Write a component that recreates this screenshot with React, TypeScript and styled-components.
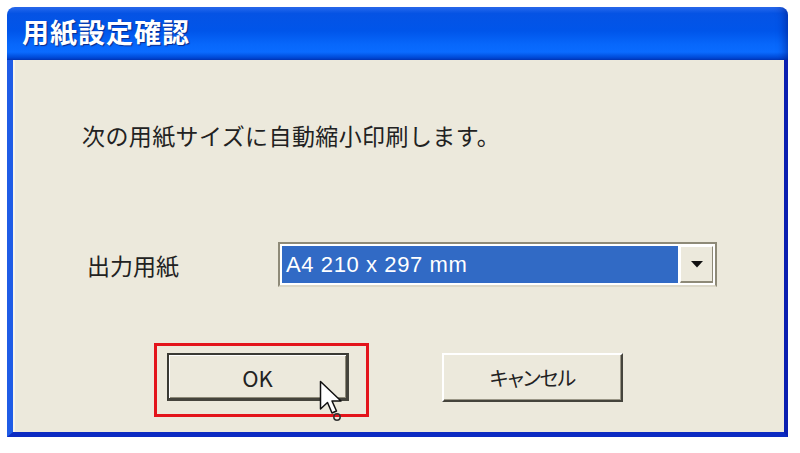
import styled, { createGlobalStyle } from "styled-components";

const GlobalStyle = createGlobalStyle`
  html, body {
    margin: 0;
    padding: 0;
    background: #ffffff;
  }
  body {
    width: 800px;
    height: 453px;
    overflow: hidden;
    font-family: "Noto Sans CJK JP", "Liberation Sans", sans-serif;
  }
`;

const jp = `"Noto Sans CJK JP", "Liberation Sans", sans-serif`;

export default function App() {
  return (
    <>
      <GlobalStyle />
      <Screen>
        <Window>
          <TitleBar>用紙設定確認</TitleBar>
          <Body>
            <Message>次の用紙サイズに自動縮小印刷します。</Message>

            <FieldRow>
              <Label>出力用紙</Label>
              <Combo>
                <Selection>A4 210 x 297 mm</Selection>
                <DropButton>
                  <svg width="12" height="7" viewBox="0 0 12 7">
                    <path d="M0 0 H12 L6 6.5 Z" fill="#111" />
                  </svg>
                </DropButton>
              </Combo>
            </FieldRow>

            <ButtonRow>
              <Highlight>
                <Button $default>OK</Button>
                <Cursor>
                  <svg width="30" height="44" viewBox="0 0 30 44">
                    <path
                      d="M1.5 1.5 L1.5 29 L8.5 22.5 L13 33 L17.5 31 L13 21 L22 21 Z"
                      fill="#ffffff"
                      stroke="#111"
                      strokeWidth="1.5"
                      strokeLinejoin="round"
                    />
                    <circle cx="18" cy="37" r="3.2" fill="none" stroke="#333" strokeWidth="1.5" />
                  </svg>
                </Cursor>
              </Highlight>
              <Button $cancel>キャンセル</Button>
            </ButtonRow>
          </Body>
        </Window>
      </Screen>
    </>
  );
}

const Screen = styled.div`
  padding: 7px 0 0 7px;
  width: 793px;
  height: 446px;
`;

const Window = styled.div`
  width: 781px;
  display: flex;
  flex-direction: column;
`;

const TitleBar = styled.div`
  height: 53px;
  box-sizing: border-box;
  padding: 0 0 4px 15px;
  display: flex;
  align-items: center;
  border-radius: 8px 8px 0 0;
  background: linear-gradient(
    180deg,
    #2a6df0 0%,
    #0553e4 12%,
    #0055ea 45%,
    #0767fb 70%,
    #0a6bff 85%,
    #0049d6 96%,
    #0036b8 100%
  );
  box-shadow: inset -8px 0 10px -6px rgba(0, 20, 120, 0.6);
  color: #ffffff;
  font-family: ${jp};
  font-weight: 700;
  font-size: 27px;
  letter-spacing: 1px;
  text-shadow: 1px 1px 1px #0a2a8c;
`;

const Body = styled.div`
  height: 377px;
  box-sizing: border-box;
  background: #ece9dc;
  border-left: 6px solid #1f5ce6;
  border-right: 4px solid #0a1fb0;
  border-bottom: 5px solid #0c2bc2;
  box-shadow: inset 2px 0 0 #f6f4ea;
  padding-top: 60px;
`;

const Message = styled.div`
  margin-left: 69px;
  height: 30px;
  line-height: 30px;
  font-family: ${jp};
  font-size: 23px;
  letter-spacing: 0.4px;
  color: #222;
`;

const FieldRow = styled.div`
  margin-top: 92px;
  display: flex;
  align-items: center;
`;

const Label = styled.div`
  width: 191px;
  margin-left: 74px;
  font-family: ${jp};
  font-size: 23px;
  color: #222;
`;

const Combo = styled.div`
  width: 439px;
  height: 45px;
  box-sizing: border-box;
  display: flex;
  padding: 2px;
  background: #ffffff;
  border: 2px solid #8e8a78;
  border-bottom-color: #dcd8c8;
`;

const Selection = styled.div`
  flex: 1;
  margin-right: 2px;
  background: #316ac5;
  color: #ffffff;
  font-family: "Liberation Sans", Arial, sans-serif;
  font-size: 22px;
  display: flex;
  align-items: center;
  padding-left: 4px;
  letter-spacing: 0.6px;
`;

const DropButton = styled.div`
  width: 33px;
  box-sizing: border-box;
  background: #ece9dc;
  border: 1px solid #ffffff;
  border-right-color: #8e8a78;
  border-bottom: 2px solid #8e8a78;
  display: flex;
  align-items: center;
  justify-content: center;
`;

const ButtonRow = styled.div`
  margin-top: 56px;
  padding-left: 141px;
  display: flex;
  align-items: flex-start;
`;

const Highlight = styled.div`
  position: relative;
  border: 3px solid #e3141b;
  padding: 7px 17px 13px 10px;
`;

const Button = styled.div<{ $default?: boolean; $cancel?: boolean }>`
  width: ${({ $cancel }) => ($cancel ? "181px" : "182px")};
  height: ${({ $cancel }) => ($cancel ? "49px" : "48px")};
  margin-left: ${({ $cancel }) => ($cancel ? "73px" : "0")};
  margin-top: ${({ $cancel }) => ($cancel ? "10px" : "0")};
  box-sizing: border-box;
  background: #ece9dc;
  display: flex;
  align-items: center;
  justify-content: center;
  font-family: ${jp};
  font-size: ${({ $cancel }) => ($cancel ? "20px" : "22px")};
  font-feature-settings: "palt";
  letter-spacing: ${({ $cancel }) => ($cancel ? "-1px" : "0")};
  color: #222;
  border: ${({ $default }) => ($default ? "2px solid #3a3a34" : "2px solid #ffffff")};
  border-right-color: #45443c;
  border-bottom-color: #45443c;
  border-right-width: ${({ $default }) => ($default ? "3px" : "2px")};
  border-bottom-width: ${({ $default }) => ($default ? "3px" : "2px")};
  box-shadow: ${({ $default }) =>
    $default
      ? "inset 1px 1px 0 #ffffff, inset -1px -1px 0 #8e8a78"
      : "inset -1px -1px 0 #9a9686"};
`;

const Cursor = styled.div`
  position: absolute;
  left: 162px;
  top: 34px;
  line-height: 0;
`;
